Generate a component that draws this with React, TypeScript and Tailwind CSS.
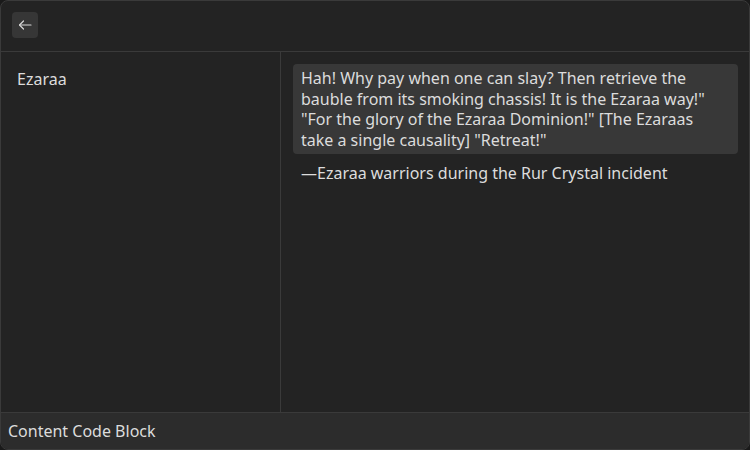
import React from 'react';

const font = { fontFamily: '"Noto Sans", "Open Sans", sans-serif' };

function BackButton() {
  return (
    <button className="flex h-[26px] w-[26px] items-center justify-center rounded-[4px] bg-[#363636] text-[#d8d8d8]">
      <svg width="16" height="16" viewBox="0 0 16 16" fill="none" stroke="currentColor" strokeWidth="1.2" strokeLinecap="round" strokeLinejoin="round">
        <path d="M14 8H2.5" />
        <path d="M6.5 4L2.5 8l4 4" />
      </svg>
    </button>
  );
}

export default function App() {
  return (
    <div className="h-[450px] w-[750px] bg-[#1a1a1a]" style={font}>
      <div className="flex h-full flex-col overflow-hidden rounded-[8px] border border-[#3a3a3a] bg-[#232323] text-[16px] leading-[20.6px] text-[#dcdcdc]">
        <div className="flex h-[51px] shrink-0 items-start border-b border-[#3a3a3a] px-[11px] pt-[11px]">
          <BackButton />
        </div>
        <div className="flex min-h-0 flex-1">
          <div className="w-[280px] shrink-0 border-r border-[#3a3a3a] px-[16px] pt-[17px]">
            Ezaraa
          </div>
          <div className="flex-1 p-[12px] pr-[11px] pt-[12px]">
            <div className="rounded-[4px] bg-[#383838] py-[4px] pl-[8px] pr-[20px]">
              Hah! Why pay when one can slay? Then retrieve the bauble from its smoking chassis! It is the Ezaraa way!" "For the glory of the Ezaraa Dominion!" [The Ezaraas take a single causality] "Retreat!"
            </div>
            <div className="mt-[9px] px-[8px]">—Ezaraa warriors during the Rur Crystal incident</div>
          </div>
        </div>
        <div className="flex h-[37px] shrink-0 items-center border-t border-[#3a3a3a] bg-[#2c2c2c] px-[7px]">
          Content Code Block
        </div>
      </div>
    </div>
  );
}
